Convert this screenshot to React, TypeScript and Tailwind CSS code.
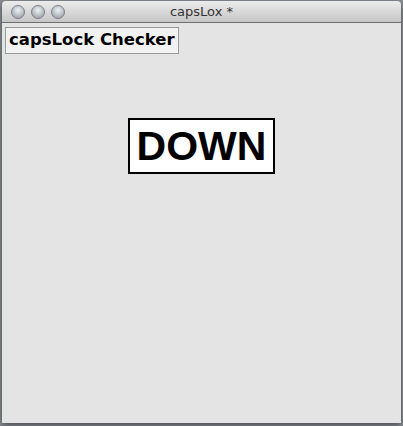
import React from "react";

export default function App() {
  return (
    <div className="w-[403px] h-[426px] bg-[#8a8f96] relative overflow-hidden" style={{ fontFamily: '"DejaVu Sans", sans-serif' }}>
      <div className="absolute left-[2px] top-[1px] w-[399px] h-[422px] flex flex-col rounded-t-[4px] overflow-hidden shadow-[0_2px_6px_rgba(0,0,0,0.5)]">
        <div className="h-[22px] bg-gradient-to-b from-[#ececec] to-[#c6c6c6] border-b border-[#6f6f6f] relative flex items-center justify-center">
          <div className="absolute left-[9px] top-[4px] flex gap-[6px]">
            {[0, 1, 2].map((i) => (
              <div key={i} className="w-[14px] h-[14px] rounded-full border border-[#7a7f86] bg-[radial-gradient(circle_at_50%_35%,#eef2f6,#a9b0b8_70%,#8c939b)]" />
            ))}
          </div>
          <span className="text-[13px] text-[#333]" style={{ fontFamily: '"Lucida Grande", "DejaVu Sans", sans-serif' }}>capsLox *</span>
        </div>
        <div className="flex-1 bg-[#e4e4e4] relative">
          <div className="absolute left-[3px] top-[4px] w-[174px] h-[27px] bg-[#f2f2f2] border border-[#9a9a9a] flex items-center pl-[3px]">
            <span className="text-[16.5px] font-bold text-black">capsLock Checker</span>
          </div>
          <div className="absolute left-[126px] top-[95px] w-[147px] h-[56px] bg-white border-2 border-black flex items-center justify-center">
            <span className="text-[41px] font-bold text-black leading-none" style={{ fontFamily: '"Liberation Sans", sans-serif' }}>DOWN</span>
          </div>
        </div>
      </div>
    </div>
  );
}
